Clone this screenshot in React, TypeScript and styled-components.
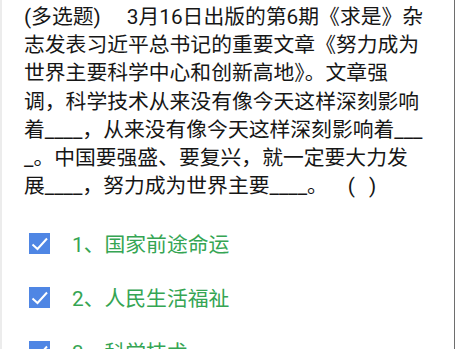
import React from "react";
import styled, { createGlobalStyle } from "styled-components";

const Global = createGlobalStyle`
  html, body { margin: 0; padding: 0; background: #ffffff; }
  body { width: 455px; height: 349px; overflow: hidden; }
`;

const Screen = styled.div`
  width: 455px;
  height: 349px;
  box-sizing: border-box;
  background: #ffffff;
  border-left: 2px solid #ececec;
  border-right: 1px solid #6e6e6e;
  overflow: hidden;
  font-family: Roboto, "Noto Sans CJK SC", sans-serif;
`;

const Question = styled.p`
  margin: 0;
  padding: 3px 0 0 22px;
  font-size: 20.8px;
  line-height: 28.2px;
  color: #161616;
  white-space: nowrap;
`;

const Gap = styled.span<{ $w: number }>`
  display: inline-block;
  width: ${(p) => p.$w}px;
`;

const Options = styled.ul`
  list-style: none;
  margin: 0;
  padding: 32px 0 0 27px;
  display: flex;
  flex-direction: column;
  gap: 32px;
`;

const Option = styled.li`
  display: flex;
  align-items: center;
  gap: 22px;
  height: 22px;
  font-size: 20.8px;
  color: #35a553;
`;

const Box = styled.span`
  width: 21px;
  height: 21px;
  background: #4f86e4;
  display: flex;
  align-items: center;
  justify-content: center;
  flex: none;
`;

const Check = () => (
  <svg width="19" height="19" viewBox="0 0 19 19">
    <path d="M2.5 10.5 L7.5 15 L17 4.5" fill="none" stroke="#ffffff" strokeWidth="2" />
  </svg>
);

const options = ["1、国家前途命运", "2、人民生活福祉", "3、科学技术"];

export default function App() {
  return (
    <>
      <Global />
      <Screen>
        <Question>
          (多选题)<Gap $w={26} />3月16日出版的第6期《求是》杂<br />
          志发表习近平总书记的重要文章《努力成为<br />
          世界主要科学中心和创新高地》。文章强<br />
          调，科学技术从来没有像今天这样深刻影响<br />
          着____，从来没有像今天这样深刻影响着___<br />
          _。中国要强盛、要复兴，就一定要大力发<br />
          展____，努力成为世界主要____。<Gap $w={20} />(<Gap $w={14} />)
        </Question>
        <Options>
          {options.map((o) => (
            <Option key={o}>
              <Box>
                <Check />
              </Box>
              {o}
            </Option>
          ))}
        </Options>
      </Screen>
    </>
  );
}
